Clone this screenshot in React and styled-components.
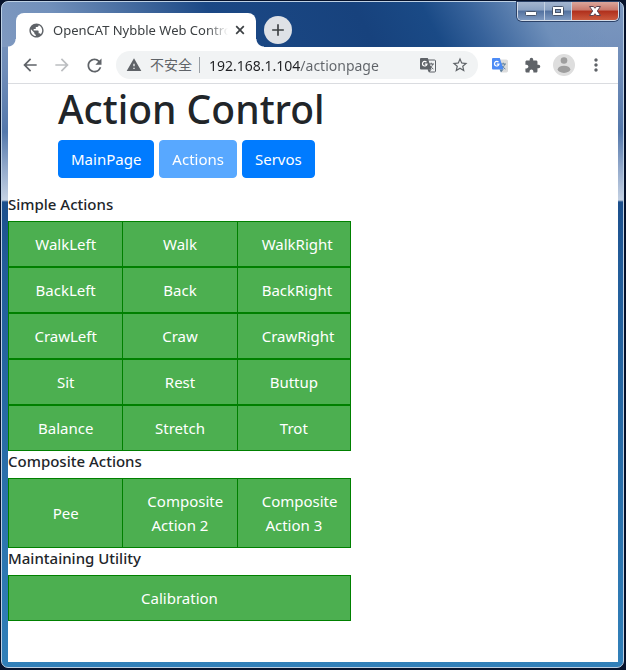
import React from "react";
import styled, { createGlobalStyle } from "styled-components";
import {
  MdPublic,
  MdAdd,
  MdArrowBack,
  MdArrowForward,
  MdRefresh,
  MdWarning,
  MdStarBorder,
  MdExtension,
  MdMoreVert,
} from "react-icons/md";

const uiFont = `"Noto Sans", "Open Sans", "Noto Sans CJK SC", sans-serif`;

const GlobalStyle = createGlobalStyle`
  *, *::before, *::after { box-sizing: border-box; }
  body {
    margin: 0;
    background: #06122b;
    font-family: ${uiFont};
    color: #212529;
  }
  button, input { font-family: inherit; }
`;

const Desktop = styled.div`
  display: flex;
  min-height: 100vh;
  padding: 1px 2px 2px 1px;
`;

const Window = styled.div`
  flex: 1;
  min-width: 0;
  display: flex;
  flex-direction: column;
  padding: 0 5px 5px 6px;
  border: 1px solid #bdd0e4;
  border-radius: 7px;
  background:
    linear-gradient(
        62deg,
        #7f99c0 0,
        #7190bb 60px,
        #1b4885 200px,
        #17427d 330px,
        #1a4a86 390px,
        rgba(48, 93, 151, 0.9) 430px,
        rgba(110, 143, 186, 0.9) 490px,
        rgba(120, 150, 190, 0) 540px
      )
      top / 100% 45px no-repeat,
    linear-gradient(
      180deg,
      #7c98c0 0,
      #6f8cb8 70px,
      #5478ab 130px,
      #91a8ca 165px,
      #c4d1e3 198px,
      #1c4f8c 200px,
      #225c99 260px,
      #3180b9 100%
    );
`;

const TabStrip = styled.div`
  display: flex;
  align-items: flex-end;
  height: 45px;
  padding-left: 8px;
`;

const Tab = styled.div`
  position: relative;
  display: flex;
  align-items: center;
  width: 240px;
  height: 34px;
  padding: 0 8px 0 12px;
  border-radius: 8px 8px 0 0;
  background: #fff;

  &::before,
  &::after {
    content: "";
    position: absolute;
    bottom: 0;
    width: 8px;
    height: 8px;
  }
  &::before {
    left: -8px;
    background: radial-gradient(circle at 0 0, transparent 7px, #fff 8px);
  }
  &::after {
    right: -8px;
    background: radial-gradient(circle at 100% 0, transparent 7px, #fff 8px);
  }
`;

const TabTitle = styled.span`
  flex: 1;
  min-width: 0;
  margin: 0 4px 0 8px;
  overflow: hidden;
  white-space: nowrap;
  font-size: 13px;
  line-height: 18px;
  color: #3c4043;
  mask-image: linear-gradient(90deg, #000 88%, transparent 100%);
`;

const PlainButton = styled.button`
  display: flex;
  align-items: center;
  justify-content: center;
  padding: 0;
  border: 0;
  background: transparent;
  color: #5f6368;
`;

const TabClose = styled(PlainButton)`
  width: 16px;
  height: 16px;
  color: #3c4043;
`;

const NewTab = styled(PlainButton)`
  width: 28px;
  height: 28px;
  margin: 0 0 3px 8px;
  border-radius: 50%;
  background: #dee1e6;
  color: #3c4043;
`;

const WindowControls = styled.div`
  align-self: flex-start;
  display: flex;
  height: 19px;
  margin-left: auto;
  margin-right: -1px;
  border: 1px solid #d3dce9;
  border-top: 0;
  border-radius: 0 0 5px 5px;
  box-shadow: 0 0 0 1px #2b4167;
  overflow: hidden;
`;

const WindowControl = styled.button`
  display: flex;
  align-items: center;
  justify-content: center;
  width: ${(p) => (p.$danger ? "46px" : "27px")};
  padding: 0;
  border: 0;
  border-right: ${(p) => (p.$danger ? "0" : "1px solid #c4d1e2")};
  background: ${(p) =>
    p.$danger
      ? "linear-gradient(180deg, #dba79c 0, #c8776a 45%, #b02f1c 50%, #cb5a3e 100%)"
      : "linear-gradient(180deg, #a4b6d0 0, #8aa1c2 45%, #52719f 50%, #7f9ac1 100%)"};
`;

const Toolbar = styled.div`
  display: flex;
  align-items: center;
  height: 37px;
  padding: 0 6px;
  border-bottom: 1px solid #dadce0;
  background: #fff;
`;

const ToolButton = styled(PlainButton)`
  flex: none;
  width: 32px;
  height: 28px;
  color: ${(p) => (p.$dim ? "#bcbec1" : "#5f6368")};
`;

const AddressBar = styled.div`
  flex: 1;
  min-width: 0;
  display: flex;
  align-items: center;
  height: 28px;
  margin: 0 6px;
  padding: 0 2px 0 10px;
  border-radius: 14px;
  background: #f1f3f4;
  color: #5f6368;
`;

const SiteStatus = styled.span`
  flex: none;
  margin-left: 8px;
  padding-right: 7px;
  border-right: 1px solid #9aa0a6;
  font-size: 14px;
  line-height: 16px;
`;

const AddressInput = styled.input`
  flex: 1;
  min-width: 0;
  height: 28px;
  margin-left: 9px;
  padding: 0;
  border: 0;
  outline: 0;
  font-size: 14px;
  color: #202124;
  background: linear-gradient(90deg, #202124 91px, #5f6368 91px);
  background-clip: text;
  -webkit-text-fill-color: transparent;
`;

const Page = styled.main`
  flex: 1;
  background: #fff;
`;

const PageHeader = styled.header`
  padding: 0 50px;
`;

const Title = styled.h1`
  margin: 0 0 6px;
  font-size: 39px;
  font-weight: 500;
  line-height: 50px;
`;

const Nav = styled.nav`
  display: flex;
  gap: 5px;
  margin-bottom: 16px;
`;

const NavButton = styled.button`
  padding: 6px 12px;
  border: 1px solid #007bff;
  border-radius: 4px;
  background: #007bff;
  color: #fff;
  font-size: 15px;
  line-height: 24px;
  &:disabled {
    opacity: 0.65;
  }
`;

const SectionTitle = styled.h2`
  margin: 0 0 6px;
  font-size: 15px;
  font-weight: 500;
  line-height: 21px;
`;

const ButtonRow = styled.div`
  display: grid;
  grid-template-columns: repeat(${(p) => p.$columns}, minmax(0, 1fr));
  max-width: 343px;
`;

const ActionButton = styled.button`
  padding: 10px 24px;
  border: 1px solid green;
  background: #4caf50;
  color: #fff;
  font-size: 15px;
  line-height: 24px;
  &:not(:last-child) {
    border-right: 0;
  }
`;

const sections = [
  {
    title: "Simple Actions",
    rows: [
      ["WalkLeft", "Walk", "WalkRight"],
      ["BackLeft", "Back", "BackRight"],
      ["CrawLeft", "Craw", "CrawRight"],
      ["Sit", "Rest", "Buttup"],
      ["Balance", "Stretch", "Trot"],
    ],
  },
  {
    title: "Composite Actions",
    rows: [["Pee", "Composite Action 2", "Composite Action 3"]],
  },
  { title: "Maintaining Utility", rows: [["Calibration"]] },
];

function TranslateIcon({ color, paper, ink, outline }) {
  return (
    <svg width="16" height="16" viewBox="0 0 16 16" aria-hidden="true">
      <path d="M6 3h8.5a1 1 0 0 1 1 1v10a1 1 0 0 1-1 1H9.500z" fill={paper} stroke={outline} />
      <path
        d="M8.500 7h5.500M11.200 5.700V7M12.800 7c-.5 2-1.800 3.500-3.300 4.500M9.800 8.500c.8 1.500 2 2.600 3.600 3.500"
        fill="none"
        stroke={ink}
      />
      <path d="M1 1h6.800l3.700 11.500H1a1 1 0 0 1-1-1V2a1 1 0 0 1 1-1z" fill={color} />
      <path d="M7.500 12.500h4L9 15.500z" fill={ink} />
      <path
        d="M6.500 5.200A2.300 2.300 0 1 0 7 7.200H4.800"
        fill="none"
        stroke="#fff"
        strokeWidth="1.200"
      />
    </svg>
  );
}

function TabCloseIcon() {
  return (
    <svg width="16" height="16" viewBox="0 0 16 16" aria-hidden="true">
      <path d="M4.200 4.200l7.600 7.600M11.800 4.200l-7.600 7.600" stroke="currentColor" strokeWidth="1.700" />
    </svg>
  );
}

function AvatarIcon() {
  return (
    <svg width="22" height="22" viewBox="0 0 22 22" aria-hidden="true">
      <circle cx="11" cy="11" r="11" fill="#dedede" />
      <circle cx="11" cy="6.500" r="3.300" fill="#9e9e9e" />
      <ellipse cx="11" cy="15.300" rx="6.300" ry="3.600" fill="#9e9e9e" />
    </svg>
  );
}

function MinimizeGlyph() {
  return (
    <svg width="14" height="12" viewBox="0 0 14 12" aria-hidden="true">
      <rect x="1.500" y="6.500" width="11" height="4" rx="1" fill="#fff" stroke="#47546b" />
    </svg>
  );
}

function MaximizeGlyph() {
  return (
    <svg width="14" height="12" viewBox="0 0 14 12" aria-hidden="true">
      <rect x="1.500" y="1.500" width="11" height="9" rx="1" fill="#fff" stroke="#47546b" />
      <rect x="4.500" y="4.500" width="5" height="3" fill="#7f98bc" stroke="#47546b" />
    </svg>
  );
}

function CloseGlyph() {
  return (
    <svg width="14" height="12" viewBox="0 0 14 12" aria-hidden="true">
      <path
        d="M1.500 1.500h4L7 3.300l1.500-1.800h4L9.300 6l3.200 4.500h-4L7 8.700l-1.500 1.800h-4L4.700 6z"
        fill="#fff"
        stroke="#5b4350"
      />
    </svg>
  );
}

export default function App() {
  return (
    <>
      <GlobalStyle />
      <Desktop>
        <Window>
          <TabStrip>
            <Tab>
              <MdPublic size={17} color="#5f6368" />
              <TabTitle>OpenCAT Nybble Web Control</TabTitle>
              <TabClose aria-label="Close tab">
                <TabCloseIcon />
              </TabClose>
            </Tab>
            <NewTab aria-label="New tab">
              <MdAdd size={20} />
            </NewTab>
            <WindowControls>
              <WindowControl aria-label="Minimize">
                <MinimizeGlyph />
              </WindowControl>
              <WindowControl aria-label="Maximize">
                <MaximizeGlyph />
              </WindowControl>
              <WindowControl $danger aria-label="Close">
                <CloseGlyph />
              </WindowControl>
            </WindowControls>
          </TabStrip>

          <Toolbar>
            <ToolButton aria-label="Back">
              <MdArrowBack size={20} />
            </ToolButton>
            <ToolButton $dim disabled aria-label="Forward">
              <MdArrowForward size={20} />
            </ToolButton>
            <ToolButton aria-label="Reload">
              <MdRefresh size={21} />
            </ToolButton>
            <AddressBar>
              <MdWarning size={16} />
              <SiteStatus>不安全</SiteStatus>
              <AddressInput aria-label="Address" defaultValue="192.168.1.104/actionpage" />
              <ToolButton aria-label="Translate this page">
                <TranslateIcon color="#5f6368" paper="#f1f3f4" ink="#5f6368" outline="#5f6368" />
              </ToolButton>
              <ToolButton aria-label="Bookmark">
                <MdStarBorder size={18} />
              </ToolButton>
            </AddressBar>
            <ToolButton aria-label="Translate extension">
              <TranslateIcon color="#4c8bf5" paper="#dcdcdc" ink="#5d7f9c" outline="#dcdcdc" />
            </ToolButton>
            <ToolButton aria-label="Extensions">
              <MdExtension size={17} />
            </ToolButton>
            <ToolButton aria-label="Profile">
              <AvatarIcon />
            </ToolButton>
            <ToolButton aria-label="Menu">
              <MdMoreVert size={20} />
            </ToolButton>
          </Toolbar>

          <Page>
            <PageHeader>
              <Title>Action Control</Title>
              <Nav>
                <NavButton>MainPage</NavButton>
                <NavButton disabled>Actions</NavButton>
                <NavButton>Servos</NavButton>
              </Nav>
            </PageHeader>
            {sections.map((section) => (
              <section key={section.title}>
                <SectionTitle>{section.title}</SectionTitle>
                {section.rows.map((row) => (
                  <ButtonRow key={row[0]} $columns={row.length}>
                    {row.map((label) => (
                      <ActionButton key={label}>{label}</ActionButton>
                    ))}
                  </ButtonRow>
                ))}
              </section>
            ))}
          </Page>
        </Window>
      </Desktop>
    </>
  );
}
